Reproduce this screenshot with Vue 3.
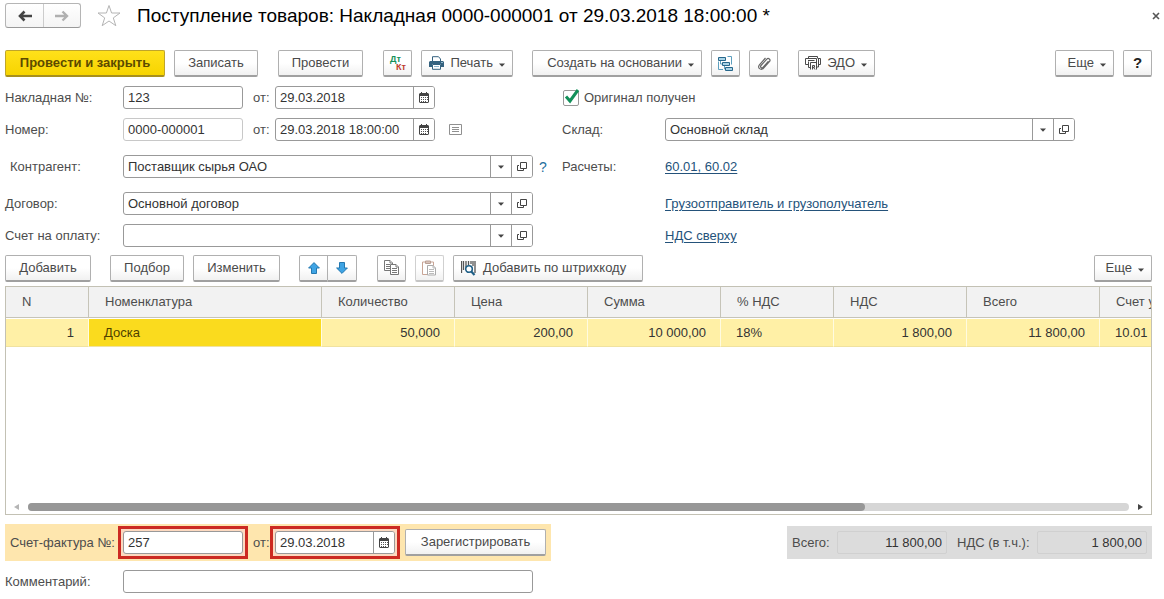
<script setup>
import { ref } from 'vue'

const invoice = ref('123')
const invoiceDate = ref('29.03.2018')
const number = ref('0000-000001')
const numberDate = ref('29.03.2018 18:00:00')
const contractor = ref('Поставщик сырья ОАО')
const contract = ref('Основной договор')
const bill = ref('')
const warehouse = ref('Основной склад')
const received = ref(true)
const facture = ref('257')
const factureDate = ref('29.03.2018')
const comment = ref('')

const columns = [
  { title: 'N', cls: 'c-n' },
  { title: 'Номенклатура', cls: 'c-name' },
  { title: 'Количество', cls: 'c-num' },
  { title: 'Цена', cls: 'c-num' },
  { title: 'Сумма', cls: 'c-num' },
  { title: '% НДС', cls: 'c-rate' },
  { title: 'НДС', cls: 'c-num' },
  { title: 'Всего', cls: 'c-num' },
  { title: 'Счет учета', cls: 'c-num' },
]
</script>

<template>
  <main class="page">
    <svg class="sprite" aria-hidden="true">
      <symbol id="i-cal" viewBox="0 0 10 11">
        <path d="M2 0h1v1h4V0h1v1h1l1 1v8l-1 1H1l-1-1V2l1-1h1z" fill="#444" />
        <path d="M1 4h8v6H1z" fill="#fff" />
        <path d="M2 5h1v1H2zM4 5h1v1H4zM6 5h1v1H6zM2 7h1v1H2zM4 7h1v1H4zM6 7h1v1H6zM8 5h1v1H8zM8 7h1v1H8zM2 9h1v1H2zM4 9h1v1H4zM6 9h1v1H6z" fill="#555" />
      </symbol>
      <symbol id="i-open" viewBox="0 0 10 10">
        <path d="M3.500.5h6v6h-6zM2 3.500H.5v5h6V7" fill="none" stroke="#444" />
      </symbol>
      <symbol id="i-down" viewBox="0 0 6 4">
        <path d="M0 .5h6L3 3.700z" fill="#444" />
      </symbol>
    </svg>

    <header class="title-row">
      <div class="nav">
        <button aria-label="Назад">
          <svg width="14" height="12" viewBox="0 0 14 12"><path d="M14 6H3M6.500 1.500L2 6l4.500 4.500" fill="none" stroke="#444" stroke-width="2.600" /></svg>
        </button>
        <button aria-label="Вперед">
          <svg width="14" height="12" viewBox="0 0 14 12"><path d="M0 6h11M7.500 1.500L12 6l-4.500 4.500" fill="none" stroke="#b0b0b0" stroke-width="2.400" /></svg>
        </button>
      </div>
      <button class="plain star" aria-label="В избранное">
        <svg width="24" height="23" viewBox="0 0 24 23"><path d="M12 1.500l2.600 7.500H23l-6.700 4.900 2.500 7.800L12 17l-6.800 4.700 2.500-7.800L1 9h8.400z" fill="#fff" stroke="#b4b4b4" /></svg>
      </button>
      <h1>Поступление товаров: Накладная 0000-000001 от 29.03.2018 18:00:00 *</h1>
      <button class="plain close" aria-label="Закрыть">
        <svg width="8" height="8" viewBox="0 0 8 8"><path d="M1 1l6 6M7 1L1 7" stroke="#555" stroke-width="1.600" /></svg>
      </button>
    </header>

    <div class="toolbar">
      <button class="btn primary">Провести и закрыть</button>
      <button class="btn w84">Записать</button>
      <button class="btn w85 far">Провести</button>
      <button class="btn icon far" aria-label="Дт/Кт">
        <svg width="18" height="18" viewBox="0 0 18 18" class="dtkt"><text x="1" y="8" fill="#159058">Дт</text><text x="7" y="16" fill="#c0392b">Кт</text></svg>
      </button>
      <button class="btn menu w92">
        <svg width="15" height="14" viewBox="0 0 15 14"><path d="M3.500 5V.700h6L11.500 3v2" fill="#fff" stroke="#35627f" /><path d="M1 5h13l1 1v5h-3V8H3v3H0V6z" fill="#35627f" /><path d="M3.500 8.500h8v4.800h-8z" fill="#fff" stroke="#35627f" /><path d="M5 10.500h5M12 6.500h2" stroke="#8fb6cc" /></svg>
        <span>Печать</span><svg width="6" height="4" class="arrow"><use href="#i-down" /></svg>
      </button>
      <button class="btn menu w170 mid">
        <span>Создать на основании</span><svg width="6" height="4" class="arrow"><use href="#i-down" /></svg>
      </button>
      <button class="btn icon" aria-label="Структура подчиненности">
        <svg width="15" height="15" viewBox="0 0 15 15"><path d="M9.500.5h4v8M.5 5.500v8H5M2.500 5v3h2M6.500 10v3h1" fill="none" stroke="#5c9fbe" /><path d="M.5 1.500h7v3h-7zM4.500 6.500h7v3h-7zM7.500 11.500h7v3h-7z" fill="#a9d3e6" stroke="#27678b" /></svg>
      </button>
      <button class="btn icon" aria-label="Файлы">
        <svg width="14" height="15" viewBox="0 0 14 15"><path d="M11.500 5.200L6 11.300c-1.300 1.400-3.300-.3-2-1.800l5.600-6.200c1.900-2 4.500.4 2.800 2.400L6.600 12c-2.700 3-6.700-.2-4.200-3.200L8.500 2" fill="none" stroke="#666" stroke-width="1.200" /></svg>
      </button>
      <button class="btn menu w77 far">
        <svg width="16" height="14" viewBox="0 0 16 14"><g fill="none" stroke="#4a4a4a"><path d="M3.500 2.500V.5h9v2M13 2.500h2.500v6H13M4 8.500H.5v-6h11v5M3.500 5.500v6h2M3 4.500h6.500M5.500 13.500v-7h6v7M13.500 2v9h-2" /><path d="M7.500 13.500v-4h2v1.800h-2M8.500 11.300l1.500 2.200" /></g></svg>
        <span>ЭДО</span><svg width="6" height="4" class="arrow"><use href="#i-down" /></svg>
      </button>
      <button class="btn menu w59 end"><span>Еще</span><svg width="6" height="4" class="arrow"><use href="#i-down" /></svg></button>
      <button class="btn icon help">?</button>
    </div>

    <section class="form">
      <div class="row">
        <label for="inv">Накладная №:</label>
        <input id="inv" v-model="invoice" class="field short">
        <label for="invd" class="from">от:</label>
        <div class="combo date">
          <input id="invd" v-model="invoiceDate">
          <button aria-label="Календарь"><svg width="10" height="11"><use href="#i-cal" /></svg></button>
        </div>
      </div>
      <div class="row">
        <label class="check">
          <span class="box">
            <input v-model="received" type="checkbox">
            <svg v-if="received" width="17" height="15" viewBox="0 0 17 15"><path d="M3 7.500l4 4.500 8-11" fill="none" stroke="#12905a" stroke-width="3" /></svg>
          </span>
          Оригинал получен
        </label>
      </div>

      <div class="row">
        <label for="num">Номер:</label>
        <input id="num" v-model="number" class="field short pale">
        <label for="numd" class="from">от:</label>
        <div class="combo date">
          <input id="numd" v-model="numberDate">
          <button aria-label="Календарь"><svg width="10" height="11"><use href="#i-cal" /></svg></button>
        </div>
        <button class="plain list" aria-label="Журнал">
          <svg width="13" height="11" viewBox="0 0 13 11"><path d="M.5.5h12v10H.5zM3 3.500h7M3 5.500h7M3 7.500h7" fill="none" stroke="#909090" /></svg>
        </button>
      </div>
      <div class="row right">
        <label for="wh">Склад:</label>
        <div class="combo">
          <input id="wh" v-model="warehouse">
          <button aria-label="Выбрать"><svg width="6" height="4"><use href="#i-down" /></svg></button>
          <button aria-label="Открыть"><svg width="10" height="10"><use href="#i-open" /></svg></button>
        </div>
      </div>

      <div class="row gap">
        <label for="ctr" class="indent">Контрагент:</label>
        <div class="combo">
          <input id="ctr" v-model="contractor">
          <button aria-label="Выбрать"><svg width="6" height="4"><use href="#i-down" /></svg></button>
          <button aria-label="Открыть"><svg width="10" height="10"><use href="#i-open" /></svg></button>
        </div>
        <button class="plain hint">?</button>
      </div>
      <div class="row right gap">
        <span class="caption">Расчеты:</span>
        <a href="#">60.01, 60.02</a>
      </div>

      <div class="row gap">
        <label for="con">Договор:</label>
        <div class="combo">
          <input id="con" v-model="contract">
          <button aria-label="Выбрать"><svg width="6" height="4"><use href="#i-down" /></svg></button>
          <button aria-label="Открыть"><svg width="10" height="10"><use href="#i-open" /></svg></button>
        </div>
      </div>
      <div class="row right gap">
        <span class="caption"></span>
        <a href="#">Грузоотправитель и грузополучатель</a>
      </div>

      <div class="row">
        <label for="bill">Счет на оплату:</label>
        <div class="combo">
          <input id="bill" v-model="bill">
          <button aria-label="Выбрать"><svg width="6" height="4"><use href="#i-down" /></svg></button>
          <button aria-label="Открыть"><svg width="10" height="10"><use href="#i-open" /></svg></button>
        </div>
      </div>
      <div class="row right">
        <span class="caption"></span>
        <a href="#">НДС сверху</a>
      </div>
    </section>

    <div class="toolbar items">
      <button class="btn w86">Добавить</button>
      <button class="btn w74 mid">Подбор</button>
      <button class="btn w87">Изменить</button>
      <div class="pair mid">
        <button class="btn icon" aria-label="Вверх">
          <svg width="12" height="12" viewBox="0 0 12 12"><path d="M6 .6L11.400 6H8.500v5.500h-5V6H.6z" fill="#3fa4e4" stroke="#2478b0" /></svg>
        </button>
        <button class="btn icon" aria-label="Вниз">
          <svg width="12" height="12" viewBox="0 0 12 12"><path d="M6 11.400L11.400 6H8.500V.5h-5V6H.6z" fill="#3fa4e4" stroke="#2478b0" /></svg>
        </button>
      </div>
      <button class="btn icon far" aria-label="Копировать">
        <svg width="16" height="16" viewBox="0 0 16 16"><g fill="#fff" stroke="#777"><path d="M.5.5H6L8.500 3v7.500h-8z" /><path d="M6 .5V3h2.500M2 4.500h4M2 6.500h4M2 8.500h4" /><path d="M6.500 4.500H12L14.500 7v7.500h-8z" /><path d="M12 4.500V7h2.500M8 8.500h5M8 10.500h5M8 12.500h5" /></g></svg>
      </button>
      <button class="btn icon faded" aria-label="Вставить">
        <svg width="15" height="16" viewBox="0 0 15 16"><path d="M.5 2h11v12.500H.5z" fill="#fff" stroke="#c9a596" /><path d="M3.500 1h5v2.500h-5z" fill="#d8c3ba" stroke="#b99f94" /><path d="M5.500 5.500H11L13.500 8v7h-8z" fill="#fff" stroke="#aaa" /><path d="M11 5.500V8h2.500M7 9.500h5M7 11.500h5M7 13.500h5" stroke="#bbb" fill="none" /></svg>
      </button>
      <button class="btn barcode w190">
        <svg width="15" height="16" viewBox="0 0 15 16"><path d="M.5 1v12M2.500 1v9M5 1v6M7.500 1v4M10 1v3M12 1v5M14 1v12" stroke="#555" stroke-width="1.300" /><circle cx="8" cy="9" r="3.300" fill="#fff" stroke="#1f5f86" stroke-width="1.600" /><path d="M10.300 11.500l3.200 3.500" stroke="#1f5f86" stroke-width="2.200" /></svg>
        <span>Добавить по штрихкоду</span>
      </button>
      <button class="btn menu w58 end"><span>Еще</span><svg width="6" height="4" class="arrow"><use href="#i-down" /></svg></button>
    </div>

    <section class="grid-box">
      <div class="clip">
        <table>
          <thead>
            <tr><th v-for="c in columns" :key="c.title" :class="c.cls">{{ c.title }}</th></tr>
          </thead>
          <tbody>
            <tr>
              <td class="num">1</td>
              <td class="current">Доска</td>
              <td class="num">50,000</td>
              <td class="num">200,00</td>
              <td class="num">10 000,00</td>
              <td>18%</td>
              <td class="num">1 800,00</td>
              <td class="num">11 800,00</td>
              <td>10.01</td>
            </tr>
          </tbody>
        </table>
      </div>
      <div class="scroll">
        <svg width="5" height="6" viewBox="0 0 5 6"><path d="M5 0v6L0 3z" fill="#b5b5b5" /></svg>
        <div class="track"><div class="thumb"></div></div>
        <svg width="5" height="6" viewBox="0 0 5 6"><path d="M0 0v6l5-3z" fill="#444" /></svg>
      </div>
    </section>

    <footer class="bottom">
      <div class="facture">
        <label for="fac">Счет-фактура №:</label>
        <div class="mark"><input id="fac" v-model="facture" class="field short"></div>
        <label for="facd" class="from">от:</label>
        <div class="mark">
          <div class="combo date small">
            <input id="facd" v-model="factureDate">
            <button aria-label="Календарь"><svg width="10" height="11"><use href="#i-cal" /></svg></button>
          </div>
        </div>
        <button class="btn register">Зарегистрировать</button>
      </div>
      <div class="totals">
        <label for="sum">Всего:</label>
        <input id="sum" value="11 800,00" readonly>
        <label for="vat" class="vat">НДС (в т.ч.):</label>
        <input id="vat" value="1 800,00" readonly>
      </div>
    </footer>

    <div class="row comment">
      <label for="com">Комментарий:</label>
      <input id="com" v-model="comment" class="field wide">
    </div>
  </main>
</template>

<style>
body {
  margin: 0;
  background: #fff;
}
</style>

<style scoped>
.page {
  box-sizing: border-box;
  min-height: 100vh;
  padding: 3px 12px 6px 5px;
  display: flex;
  flex-direction: column;
  font: 13px/16px "Liberation Sans", Arial, sans-serif;
  color: #4d4d4d;
}
.page * { box-sizing: border-box; }
.sprite { position: absolute; width: 0; height: 0; }
button, input { font: inherit; color: inherit; margin: 0; }
button { padding: 0; cursor: pointer; white-space: nowrap; }
svg { display: block; flex: none; }
.plain { border: 0; background: none; }

.title-row { display: flex; align-items: center; height: 25px; }
.nav {
  display: flex;
  height: 25px;
  border: 1px solid #b5b5b5;
  border-bottom-color: #999;
  border-radius: 3px;
  background: linear-gradient(#fff, #f4f4f4);
}
.nav button {
  width: 37px;
  border: 0;
  background: none;
  display: flex;
  align-items: center;
  justify-content: center;
}
.nav button + button { border-left: 1px solid #ccc; }
.star { margin-left: 16px; }
h1 {
  margin: 0 0 0 16px;
  font-size: 19px;
  line-height: 24px;
  font-weight: 400;
  color: #000;
}
.close { margin-left: auto; margin-right: -8px; }

.toolbar { display: flex; gap: 9px; margin-top: 22px; height: 27px; }
.btn {
  display: flex;
  align-items: center;
  justify-content: center;
  height: 27px;
  border: 1px solid #b0b0b0;
  border-bottom: 2px solid #a0a0a0;
  border-radius: 2px;
  background: linear-gradient(#fff, #fff 50%, #f1f1f1);
  color: #4a4a4a;
}
.primary {
  width: 160px;
  font-weight: 700;
  color: #5c4a00;
  background: linear-gradient(#ffe11a, #f7d400);
  border-color: #bfa52a;
  border-bottom-color: #a8901c;
}
.far { margin-left: 11px; }
.mid { margin-left: 10px; }
.icon { width: 29px; }
.menu { justify-content: flex-end; padding-right: 7px; gap: 6px; }
.arrow { margin-top: 3px; }
.end { margin-left: auto; }
.w58 { width: 58px; }
.w59 { width: 59px; }
.w74 { width: 74px; }
.w77 { width: 77px; }
.w84 { width: 84px; }
.w85 { width: 85px; }
.w86 { width: 86px; }
.w87 { width: 87px; }
.w92 { width: 92px; }
.w170 { width: 170px; }
.w190 { width: 190px; }
.help { font-size: 15px; font-weight: 700; color: #222; }
.dtkt { font-size: 9px; font-weight: 700; }

.form {
  display: grid;
  grid-template-columns: 557px 1fr;
  row-gap: 9px;
  margin-top: 9px;
}
.row { display: flex; align-items: center; height: 23px; }
.row > label, .caption { width: 118px; flex: none; }
.row.right > label, .row.right > .caption { width: 103px; }
.gap { margin-top: 5px; }
.row > .from, .from { width: 32px; padding-left: 10px; }
.row > .indent { padding-left: 5px; }
.row > .check { display: flex; align-items: center; gap: 5px; width: auto; }
.box { position: relative; display: block; width: 17px; height: 16px; }
.box input {
  appearance: none;
  display: block;
  width: 16px;
  height: 16px;
  margin-left: 1px;
  border: 1px solid #999;
  border-radius: 2px;
  background: #fff;
}
.box svg { position: absolute; left: 1px; top: -1px; pointer-events: none; }
.field, .combo {
  height: 23px;
  border: 1px solid #999;
  border-radius: 3px;
  background: #fff;
  color: #333;
}
.field { padding: 0 4px; outline: 0; }
.short { width: 120px; }
.pale { border-color: #c8c8c8; }
.wide { width: 410px; }
.combo { display: flex; width: 410px; overflow: hidden; }
.combo input {
  flex: 1;
  min-width: 0;
  border: 0;
  padding: 0 4px;
  background: none;
  outline: 0;
}
.combo button {
  width: 21px;
  border: 0;
  border-left: 1px solid #999;
  background: #fff;
  display: flex;
  align-items: center;
  justify-content: center;
}
.date { width: 160px; }
.small { width: 120px; }
.list { margin-left: 14px; }
.hint { margin-left: 6px; font-size: 14px; color: #1f6f9c; }
a { color: #24527a; text-decoration: underline; text-underline-offset: 2px; }

.items { margin-top: 8px; }
.pair { display: flex; }
.pair .btn:first-child { border-radius: 2px 0 0 2px; }
.pair .btn + .btn { border-left: 0; border-radius: 0 2px 2px 0; }
.faded { border-color: #d0d0d0; border-bottom-color: #c4c4c4; }
.barcode { justify-content: flex-start; padding-left: 7px; gap: 7px; }

.grid-box {
  flex: 1 0 auto;
  display: flex;
  flex-direction: column;
  justify-content: space-between;
  margin-top: 4px;
  border: 1px solid #c3c1b4;
}
.clip { overflow: hidden; }
table { width: 1227px; table-layout: fixed; border-collapse: separate; border-spacing: 0; }
th {
  height: 31px;
  padding: 0 16px;
  text-align: left;
  font-weight: 400;
  background: #f2f2f2;
  border-right: 1px solid #c6c4b8;
  border-bottom: 1px solid #c6c4b8;
}
td {
  height: 29px;
  padding: 0 15px;
  background: #fff0a6;
  color: #333;
  border-top: 1px solid #fff;
  border-right: 1px solid #fffbe0;
  border-bottom: 1px solid #f0e2a0;
}
td.num { text-align: right; padding-right: 14px; }
td.current { background: #fadb1e; color: #4d4000; }
.c-n { width: 83px; }
.c-name { width: 233px; }
.c-num { width: 133px; }
.c-rate { width: 113px; }
.scroll { display: flex; align-items: center; gap: 9px; padding: 0 8px 3px; }
.track { flex: 1; height: 8px; border-radius: 4px; background: #d6d6d6; }
.thumb { width: 76%; height: 8px; border-radius: 4px; background: #979797; }

.bottom { display: flex; justify-content: space-between; align-items: flex-start; margin-top: 9px; }
.facture {
  display: flex;
  align-items: center;
  height: 37px;
  padding: 0 5px;
  background: #fee6ae;
}
.facture > label:first-child { width: 108px; white-space: nowrap; }
.facture .from { width: 22px; padding-left: 5px; }
.mark { border: 3px solid #cc2a22; padding: 2px; background: #fcd9c0; }
.register { width: 141px; margin-left: 5px; }
.totals {
  display: flex;
  align-items: center;
  height: 33px;
  margin-top: 2px;
  padding: 0 5px;
  background: #dcdcdc;
}
.totals label { width: 39px; white-space: nowrap; }
.totals .vat { width: 74px; }
.totals input {
  width: 110px;
  height: 23px;
  margin: 0 10px 0 6px;
  padding: 0 4px;
  border: 1px solid #d0d0d0;
  border-radius: 2px;
  background: none;
  text-align: right;
  color: #333;
}
.totals input:last-child { margin-right: 0; }
.comment { margin-top: 9px; }
</style>
